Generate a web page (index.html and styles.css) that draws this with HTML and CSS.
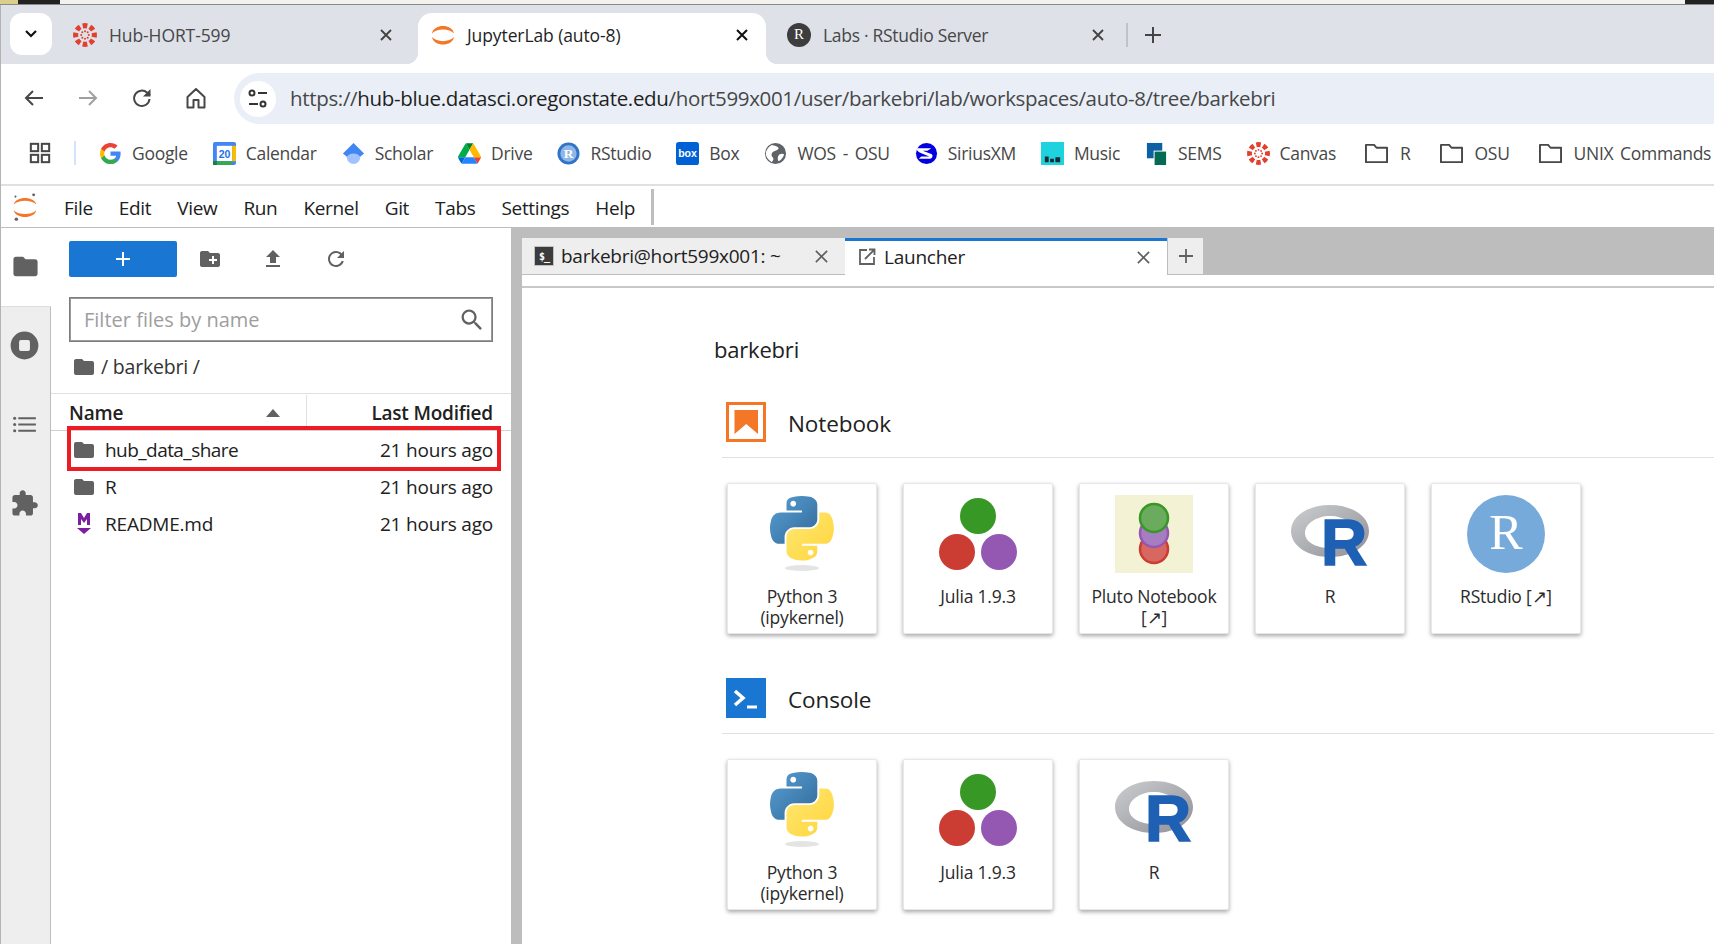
FILE: index.html
```html
<!DOCTYPE html>
<html>
<head>
    <meta charset="UTF-8">
    <title>JupyterLab (auto-8)</title>
    <link rel="stylesheet" href="styles.css">
</head>
<body>
    <svg class="sprites" width="0" height="0">
        <defs>
            <symbol id="canvas" viewBox="0 0 24 24">
                <g fill="#e2402f">
                    <path id="wedge" d="M9.200 .4a12 12 0 0 1 5.600 0l-1 5a7 7 0 0 0-3.600 0z"/>
                    <use href="#wedge" transform="rotate(45 12 12)"/>
                    <use href="#wedge" transform="rotate(90 12 12)"/>
                    <use href="#wedge" transform="rotate(135 12 12)"/>
                    <use href="#wedge" transform="rotate(180 12 12)"/>
                    <use href="#wedge" transform="rotate(225 12 12)"/>
                    <use href="#wedge" transform="rotate(270 12 12)"/>
                    <use href="#wedge" transform="rotate(315 12 12)"/>
                    <circle cx="12" cy="8.200" r="1"/><circle cx="12" cy="15.800" r="1"/>
                    <circle cx="8.200" cy="12" r="1"/><circle cx="15.800" cy="12" r="1"/>
                    <circle cx="9.300" cy="9.300" r="1"/><circle cx="14.700" cy="9.300" r="1"/>
                    <circle cx="9.300" cy="14.700" r="1"/><circle cx="14.700" cy="14.700" r="1"/>
                </g>
            </symbol>
            <symbol id="jupyter" viewBox="0 0 24 24">
                <path fill="#f37726" d="M1 10.500C2.500 .5 21.500 .5 23 10.500 18.500 5 5.500 5 1 10.500z"/>
                <path fill="#f37726" d="M1 14C2.500 24 21.500 24 23 14 18.500 19.500 5.500 19.500 1 14z"/>
            </symbol>
            <symbol id="folder" viewBox="0 0 24 24">
                <path d="M10 4H4c-1.100 0-1.990.9-1.990 2L2 18c0 1.100.9 2 2 2h16c1.100 0 2-.9 2-2V8c0-1.100-.9-2-2-2h-8l-2-2z"/>
            </symbol>
            <symbol id="folder-line" viewBox="0 0 24 24">
                <path fill="none" stroke="#474747" stroke-width="2" stroke-linejoin="round" d="M1 3h8.500l2.500 3h11v15H1z"/>
            </symbol>
            <symbol id="python" viewBox="0 0 78 78">
                <g transform="translate(7 1) scale(.575)">
                    <path fill="url(#py-blue)" d="M54.919 0C50.335.022 45.958.413 42.106 1.095 30.760 3.099 28.700 7.295 28.700 15.032v10.219h26.813v3.406H18.638c-7.793 0-14.616 4.684-16.750 13.594-2.462 10.213-2.571 16.586 0 27.250 1.906 7.938 6.458 13.594 14.250 13.594h9.219v-12.250c0-8.850 7.657-16.656 16.750-16.656h26.781c7.455 0 13.406-6.138 13.406-13.625V15.032c0-7.266-6.130-12.725-13.406-13.937C64.282.328 59.502-.02 54.919 0zm-14.500 8.220c2.770 0 5.031 2.298 5.031 5.124 0 2.817-2.261 5.094-5.031 5.094-2.780 0-5.031-2.277-5.031-5.094 0-2.826 2.251-5.125 5.031-5.125z"/>
                    <path fill="url(#py-yellow)" d="M85.638 28.657v11.906c0 9.231-7.826 17-16.750 17H42.106c-7.336 0-13.406 6.278-13.406 13.625v25.531c0 7.266 6.318 11.540 13.406 13.625 8.487 2.496 16.626 2.947 26.781 0 6.750-1.954 13.406-5.888 13.406-13.625V86.501H55.513v-3.406h40.187c7.792 0 10.696-5.421 13.406-13.594 2.800-8.414 2.740-16.505 0-27.250-1.925-7.737-5.604-13.594-13.406-13.594zM70.575 93.313c2.780 0 5.031 2.277 5.031 5.094 0 2.826-2.251 5.125-5.031 5.125-2.770 0-5.031-2.299-5.031-5.125 0-2.817 2.261-5.094 5.031-5.094z"/>
                </g>
                <ellipse cx="39" cy="73" rx="17" ry="3" fill="#e4e4e4"/>
            </symbol>
            <linearGradient id="py-blue" x1="0" y1="0" x2="1" y2="1">
                <stop offset="0" stop-color="#5a9fd4"/><stop offset="1" stop-color="#306998"/>
            </linearGradient>
            <linearGradient id="py-yellow" x1="0" y1="0" x2="1" y2="1">
                <stop offset="0" stop-color="#ffe873"/><stop offset="1" stop-color="#ffd43b"/>
            </linearGradient>
            <linearGradient id="r-grey" x1="0" y1="0" x2="1" y2="1">
                <stop offset="0" stop-color="#cbced0"/><stop offset="1" stop-color="#8f8f96"/>
            </linearGradient>
            <symbol id="julia" viewBox="0 0 78 78">
                <circle cx="39" cy="21" r="18" fill="#389826"/>
                <circle cx="18" cy="57" r="18" fill="#cb3c33"/>
                <circle cx="60" cy="57" r="18" fill="#9558b2"/>
            </symbol>
            <symbol id="rlogo" viewBox="0 0 78 78">
                <path fill="url(#r-grey)" fill-rule="evenodd" d="M0 36C0 21 17 10 39 10s39 11 39 26-17 26-39 26S0 51 0 36zm14 2c0 9 11 15 25 15s25-6 25-15-11-17-25-17-25 8-25 17z"/>
            </symbol>
        </defs>
    </svg>

    <div class="top-strip">
        <span class="strip-khaki"></span>
        <span class="strip-dark"></span>
        <span class="strip-fill"></span>
        <span class="strip-dark strip-end"></span>
    </div>

    <div class="window">
        <div class="tabstrip">
            <div class="tab-search">
                <svg width="14" height="10" viewBox="0 0 14 10"><path d="M2 2l5 5 5-5" fill="none" stroke="#111" stroke-width="2.200"/></svg>
            </div>
            <div class="tab tab-hub">
                <svg class="tab-icon"><use href="#canvas"/></svg>
                <span class="tab-title">Hub-HORT-599</span>
                <svg class="tab-close" viewBox="0 0 14 14"><path d="M2 2l10 10M12 2L2 12" stroke="#444" stroke-width="1.900"/></svg>
            </div>
            <div class="tab tab-active">
                <svg class="tab-icon"><use href="#jupyter"/></svg>
                <span class="tab-title">JupyterLab (auto-8)</span>
                <svg class="tab-close" viewBox="0 0 14 14"><path d="M2 2l10 10M12 2L2 12" stroke="#111" stroke-width="2"/></svg>
            </div>
            <div class="tab tab-rs">
                <span class="r-badge">R</span>
                <span class="tab-title">Labs · RStudio Server</span>
                <svg class="tab-close" viewBox="0 0 14 14"><path d="M2 2l10 10M12 2L2 12" stroke="#444" stroke-width="1.900"/></svg>
            </div>
            <span class="tab-sep"></span>
            <svg class="tab-new" width="18" height="18" viewBox="0 0 18 18"><path d="M9 1v16M1 9h16" stroke="#444" stroke-width="2"/></svg>
        </div>

        <div class="toolbar">
            <svg class="nav-btn" viewBox="0 0 24 24"><path d="M21 12H4M11 5l-7 7 7 7" fill="none" stroke="#474747" stroke-width="2"/></svg>
            <svg class="nav-btn" viewBox="0 0 24 24"><path d="M3 12h17M13 5l7 7-7 7" fill="none" stroke="#a0a0a0" stroke-width="2"/></svg>
            <svg class="nav-btn" viewBox="0 0 24 24"><path d="M19.500 13a7.700 7.700 0 1 1-2.300-6.200L20 9.500" fill="none" stroke="#474747" stroke-width="2"/><path d="M20.500 3v7.500H13z" fill="#474747"/></svg>
            <svg class="nav-btn" viewBox="0 0 24 24"><path d="M3.500 11L12 3l8.500 8v10.500h-6V14h-5v7.500h-6z" fill="none" stroke="#474747" stroke-width="2" stroke-linejoin="round"/></svg>
            <div class="omnibox">
                <span class="site-info">
                    <svg width="22" height="24" viewBox="0 0 22 24"><circle cx="5" cy="6" r="2.500" fill="none" stroke="#333" stroke-width="2"/><path d="M11 6h9M2 17h9" stroke="#333" stroke-width="2"/><circle cx="16" cy="17" r="2.500" fill="none" stroke="#333" stroke-width="2"/></svg>
                </span>
                <span class="url"><span class="url-dim">https://</span><span class="url-host">hub-blue.datasci.oregonstate.edu</span><span class="url-dim">/hort599x001/user/barkebri/lab/workspaces/auto-8/tree/barkebri</span></span>
            </div>
        </div>

        <div class="bookmarks">
            <svg class="apps" viewBox="0 0 24 24"><g fill="none" stroke="#474747" stroke-width="2.200"><rect x="2" y="2" width="8" height="8"/><rect x="14" y="2" width="8" height="8"/><rect x="2" y="14" width="8" height="8"/><rect x="14" y="14" width="8" height="8"/></g></svg>
            <span class="bm-sep"></span>
            <div class="bm">
                <svg class="bm-icon" viewBox="0 0 24 24">
                    <path fill="#4285F4" d="M22.560 12.250c0-.78-.07-1.530-.2-2.250H12v4.260h5.920c-.26 1.370-1.040 2.530-2.210 3.310v2.770h3.570c2.080-1.920 3.280-4.740 3.280-8.090z"/>
                    <path fill="#34A853" d="M12 23c2.970 0 5.460-.98 7.280-2.660l-3.570-2.770c-.98.66-2.230 1.060-3.710 1.060-2.860 0-5.290-1.930-6.160-4.530H2.180v2.840C3.990 20.530 7.700 23 12 23z"/>
                    <path fill="#FBBC05" d="M5.840 14.090c-.22-.66-.35-1.360-.35-2.090s.13-1.430.35-2.090V7.070H2.180C1.430 8.550 1 10.220 1 12s.43 3.450 1.180 4.930l3.660-2.840z"/>
                    <path fill="#EA4335" d="M12 5.380c1.620 0 3.060.56 4.210 1.640l3.150-3.150C17.450 2.090 14.970 1 12 1 7.700 1 3.990 3.470 2.180 7.070l3.660 2.840c.87-2.600 3.300-4.530 6.160-4.530z"/>
                </svg>
                <span>Google</span>
            </div>
            <div class="bm">
                <svg class="bm-icon" viewBox="0 0 24 24">
                    <rect width="24" height="24" rx="2" fill="#4285f4"/>
                    <rect x="4" y="4" width="16" height="16" fill="#fff"/>
                    <rect x="4" y="20" width="16" height="4" fill="#34a853"/>
                    <rect y="20" width="4" height="4" fill="#188038"/>
                    <rect x="20" y="4" width="4" height="16" fill="#fbbc04"/>
                    <text x="12" y="17" class="cal-num">20</text>
                </svg>
                <span>Calendar</span>
            </div>
            <div class="bm">
                <svg class="bm-icon" viewBox="0 0 24 24">
                    <circle cx="12" cy="16" r="7" fill="#a0c3ff"/>
                    <path d="M12 1l11 11-4 3.500C17 13 15 12 12 12s-5 1-7 3.500L1 12z" fill="#4285f4"/>
                </svg>
                <span>Scholar</span>
            </div>
            <div class="bm">
                <svg class="bm-icon" viewBox="0 0 87.300 78">
                    <path d="m6.600 66.850 3.850 6.650c.8 1.400 1.950 2.500 3.300 3.300l13.750-23.800h-27.500c0 1.550.4 3.100 1.200 4.500z" fill="#0066da"/>
                    <path d="m43.650 25-13.750-23.800c-1.350.8-2.500 1.900-3.300 3.300l-25.400 44a9.060 9.060 0 0 0 -1.200 4.500h27.500z" fill="#00ac47"/>
                    <path d="m73.550 76.800c1.350-.8 2.500-1.900 3.300-3.300l1.600-2.750 7.650-13.250c.8-1.400 1.200-2.950 1.200-4.500h-27.502l5.852 11.500z" fill="#ea4335"/>
                    <path d="m43.650 25 13.750-23.800c-1.350-.8-2.900-1.200-4.500-1.200h-18.500c-1.600 0-3.150.45-4.500 1.200z" fill="#00832d"/>
                    <path d="m59.800 53h-32.300l-13.750 23.800c1.350.8 2.900 1.200 4.500 1.200h50.800c1.600 0 3.150-.45 4.500-1.200z" fill="#2684fc"/>
                    <path d="m73.400 26.500-12.700-22c-.8-1.400-1.950-2.500-3.300-3.300l-13.750 23.800 16.150 28h27.450c0-1.550-.4-3.100-1.200-4.500z" fill="#ffba00"/>
                </svg>
                <span>Drive</span>
            </div>
            <div class="bm">
                <svg class="bm-icon" viewBox="0 0 24 24">
                    <circle cx="12" cy="12" r="11.500" fill="#2f74c8"/>
                    <circle cx="12" cy="12" r="8.500" fill="#8fb6e6"/>
                    <text x="12" y="17" class="bm-r">R</text>
                </svg>
                <span>RStudio</span>
            </div>
            <div class="bm">
                <svg class="bm-icon" viewBox="0 0 24 24">
                    <rect width="24" height="24" rx="3" fill="#0061d5"/>
                    <text x="12" y="16" class="bm-box">box</text>
                </svg>
                <span>Box</span>
            </div>
            <div class="bm">
                <svg class="bm-icon" viewBox="0 0 24 24">
                    <circle cx="12" cy="12" r="11" fill="#5f6368"/>
                    <path d="M8 3c3 1 6 1 7 3s-3 3-5 4-3 4-1 6 0 4-1 5c-3-2-6-5-6-9 0-4 3-7 6-9zM16 13c2-1 4-1 5 0-1 3-3 6-6 7-1-2-1-5 1-7z" fill="#fff"/>
                </svg>
                <span>WOS - OSU</span>
            </div>
            <div class="bm">
                <svg class="bm-icon" viewBox="0 0 24 24">
                    <circle cx="12" cy="12" r="11" fill="#0000e0"/>
                    <path d="M2 6.500h15L13 9H8l9 3.500c2.500 1.500 1 5-2 5H4l2.500-2.500H15L6 11.500C3.500 10 1 8.500 2 6.500z" fill="#fff"/>
                </svg>
                <span>SiriusXM</span>
            </div>
            <div class="bm">
                <svg class="bm-icon" viewBox="0 0 24 24">
                    <rect width="24" height="24" fill="#1ed3de"/>
                    <path d="M4 15h4v6H4zM9.500 17.500h4V21h-4zM15 16h5v5h-5z" fill="#1c2b33"/>
                </svg>
                <span>Music</span>
            </div>
            <div class="bm bm-sems">
                <svg class="bm-icon" viewBox="0 0 24 24">
                    <rect x="2" y="1" width="16" height="16" fill="#0b61a4"/>
                    <rect x="9" y="9" width="13" height="14" fill="#fff"/>
                    <rect x="10" y="10" width="12" height="14" fill="#046a53"/>
                </svg>
                <span>SEMS</span>
            </div>
            <div class="bm">
                <svg class="bm-icon"><use href="#canvas"/></svg>
                <span>Canvas</span>
            </div>
            <div class="bm bm-folder">
                <svg class="bm-icon"><use href="#folder-line"/></svg>
                <span>R</span>
            </div>
            <div class="bm bm-folder">
                <svg class="bm-icon"><use href="#folder-line"/></svg>
                <span>OSU</span>
            </div>
            <div class="bm bm-folder">
                <svg class="bm-icon"><use href="#folder-line"/></svg>
                <span>UNIX Commands</span>
            </div>
        </div>

        <div class="menubar">
            <svg class="jp-logo" viewBox="0 0 30 34">
                <path fill="#f37726" d="M2 14C4 4 26 4 28 14 22 8.500 8 8.500 2 14z"/>
                <path fill="#f37726" d="M2 21C4 31 26 31 28 21 22 26.500 8 26.500 2 21z"/>
                <circle cx="25" cy="3" r="1.700" fill="#616161"/>
                <circle cx="4" cy="5" r="1.200" fill="#616161"/>
                <circle cx="5" cy="31" r="2" fill="#616161"/>
            </svg>
            <div class="menu-items">
                <span>File</span><span>Edit</span><span>View</span><span>Run</span><span>Kernel</span><span>Git</span><span>Tabs</span><span>Settings</span><span>Help</span>
            </div>
            <span class="menu-end"></span>
        </div>

        <div class="workspace">
            <div class="sidebar">
                <div class="side-tab side-active">
                    <svg class="side-icon" viewBox="0 0 24 24"><use href="#folder"/></svg>
                </div>
                <div class="side-tab">
                    <svg class="side-icon" viewBox="0 0 24 24"><path fill-rule="evenodd" d="M12 .5a11.500 11.500 0 1 1 0 23 11.500 11.500 0 0 1 0-23zM9 7.500A1.500 1.500 0 0 0 7.500 9v6A1.500 1.500 0 0 0 9 16.500h6a1.500 1.500 0 0 0 1.500-1.500V9A1.500 1.500 0 0 0 15 7.500z"/></svg>
                </div>
                <div class="side-tab">
                    <svg class="side-icon" viewBox="-2 -2 28 28"><path d="M6 5h17v2H6zM6 11h17v2H6zM6 17h17v2H6z"/><circle cx="2.500" cy="6" r="1.500"/><circle cx="2.500" cy="12" r="1.500"/><circle cx="2.500" cy="18" r="1.500"/></svg>
                </div>
                <div class="side-tab">
                    <svg class="side-icon" viewBox="0 0 24 24"><path d="M20.500 11H19V7c0-1.100-.9-2-2-2h-4V3.500C13 2.120 11.880 1 10.500 1S8 2.120 8 3.500V5H4c-1.100 0-1.990.9-1.990 2v3.800H3.500c1.490 0 2.700 1.210 2.700 2.700s-1.210 2.700-2.700 2.700H2V20c0 1.100.9 2 2 2h3.800v-1.500c0-1.490 1.210-2.700 2.700-2.700 1.490 0 2.700 1.210 2.700 2.700V22H17c1.100 0 2-.9 2-2v-4h1.500c1.380 0 2.500-1.120 2.500-2.500S21.880 11 20.500 11z"/></svg>
                </div>
            </div>

            <div class="files">
                <div class="files-toolbar">
                    <button class="new-btn">
                        <svg width="16" height="16" viewBox="0 0 16 16"><path d="M8 1v14M1 8h14" stroke="#fff" stroke-width="2"/></svg>
                    </button>
                    <svg class="tool-icon" viewBox="0 0 24 24"><path d="M20 6h-8l-2-2H4c-1.110 0-1.990.89-1.990 2L2 18c0 1.110.89 2 2 2h16c1.110 0 2-.89 2-2V8c0-1.110-.89-2-2-2zm-1 8h-3v3h-2v-3h-3v-2h3V9h2v3h3v2z"/></svg>
                    <svg class="tool-icon" viewBox="0 0 24 24"><path d="M9 16h6v-6h4l-7-7-7 7h4v6zm-4 2h14v2H5z"/></svg>
                    <svg class="tool-icon" viewBox="0 0 24 24"><path d="M17.650 6.350C16.200 4.900 14.210 4 12 4c-4.420 0-7.990 3.580-7.990 8s3.570 8 7.990 8c3.730 0 6.840-2.550 7.730-6h-2.080c-.82 2.330-3.040 4-5.650 4-3.310 0-6-2.690-6-6s2.690-6 6-6c1.660 0 3.140.69 4.220 1.780L13 11h7V4l-2.350 2.350z"/></svg>
                </div>
                <div class="filter">
                    <span>Filter files by name</span>
                    <svg class="search-icon" viewBox="0 0 24 24"><path d="M15.500 14h-.79l-.28-.27A6.470 6.470 0 0 0 16 9.500 6.500 6.500 0 1 0 9.500 16c1.610 0 3.090-.59 4.230-1.570l.27.28v.79l5 4.990L20.490 19l-4.990-5zm-6 0C7.010 14 5 11.990 5 9.500S7.010 5 9.500 5 14 7.010 14 9.500 11.990 14 9.500 14z"/></svg>
                </div>
                <div class="crumbs">
                    <svg class="file-icon"><use href="#folder"/></svg>
                    <span>/ barkebri /</span>
                </div>
                <div class="list-head">
                    <div class="head-name">
                        <span>Name</span>
                        <svg width="14" height="8" viewBox="0 0 14 8"><path d="M0 8l7-8 7 8z" fill="#616161"/></svg>
                    </div>
                    <div class="head-date">Last Modified</div>
                </div>
                <div class="list-row">
                    <svg class="file-icon"><use href="#folder"/></svg>
                    <span class="row-name row-tight">hub_data_share</span>
                    <span class="row-date">21 hours ago</span>
                    <span class="row-mark"></span>
                </div>
                <div class="list-row">
                    <svg class="file-icon"><use href="#folder"/></svg>
                    <span class="row-name">R</span>
                    <span class="row-date">21 hours ago</span>
                </div>
                <div class="list-row">
                    <svg class="file-icon" viewBox="0 0 24 24">
                        <path d="M6 1h3l3 5 3-5h3v12h-3V7l-3 4-3-4v6H6z" fill="#7b1fa2"/>
                        <path d="M5 16h14l-7 6z" fill="#7b1fa2"/>
                    </svg>
                    <span class="row-name">README.md</span>
                    <span class="row-date">21 hours ago</span>
                </div>
            </div>

            <div class="main">
                <div class="doc-tabs">
                    <div class="doc-tab">
                        <span class="term-icon">$_</span>
                        <span class="doc-title">barkebri@hort599x001: ~</span>
                        <svg class="doc-close" viewBox="0 0 16 16"><path d="M2 2l12 12M14 2L2 14" stroke="#616161" stroke-width="1.800"/></svg>
                    </div>
                    <div class="doc-tab doc-current">
                        <svg class="launch-icon" viewBox="0 0 18 18"><path d="M9 2H2v14h14V9" fill="none" stroke="#616161" stroke-width="1.800"/><path d="M7 11l9-9M11 1.500h5.500V7" fill="none" stroke="#616161" stroke-width="1.800"/></svg>
                        <span class="doc-title">Launcher</span>
                        <svg class="doc-close" viewBox="0 0 16 16"><path d="M2 2l12 12M14 2L2 14" stroke="#616161" stroke-width="1.800"/></svg>
                    </div>
                    <div class="doc-add">
                        <svg width="16" height="16" viewBox="0 0 16 16"><path d="M8 1v14M1 8h14" stroke="#616161" stroke-width="1.800"/></svg>
                    </div>
                </div>
                <div class="doc-toolbar"></div>
                <div class="launcher">
                    <div class="cwd">barkebri</div>

                    <div class="section-head">
                        <svg class="section-icon" viewBox="0 0 40 40">
                            <rect x="1.500" y="1.500" width="37" height="37" fill="#fff" stroke="#f37726" stroke-width="3"/>
                            <path d="M8.500 8h23.500v24l-11.700-10L8.500 32z" fill="#f37726"/>
                        </svg>
                        <span>Notebook</span>
                    </div>
                    <div class="cards">
                        <div class="card">
                            <svg class="card-icon"><use href="#python"/></svg>
                            <div class="card-label">Python 3<br>(ipykernel)</div>
                        </div>
                        <div class="card">
                            <svg class="card-icon"><use href="#julia"/></svg>
                            <div class="card-label">Julia 1.9.3</div>
                        </div>
                        <div class="card">
                            <svg class="card-icon" viewBox="0 0 78 78">
                                <rect width="78" height="78" fill="#f4f2d5"/>
                                <circle cx="39" cy="54" r="14" fill="#d8675f" stroke="#cb3c33" stroke-width="2.500"/>
                                <circle cx="39" cy="38" r="14" fill="#a77dc1" stroke="#9558b2" stroke-width="2.500"/>
                                <circle cx="39" cy="23" r="14" fill="#6aab5d" stroke="#389826" stroke-width="2.500"/>
                            </svg>
                            <div class="card-label">Pluto Notebook<br>[↗]</div>
                        </div>
                        <div class="card">
                            <svg class="card-icon" viewBox="0 0 78 78">
                                <use href="#rlogo"/>
                                <text x="30" y="70" class="r-big">R</text>
                            </svg>
                            <div class="card-label">R</div>
                        </div>
                        <div class="card">
                            <svg class="card-icon" viewBox="0 0 78 78">
                                <circle cx="39" cy="39" r="39" fill="#75aadb"/>
                                <text x="39" y="54" class="r-serif">R</text>
                            </svg>
                            <div class="card-label">RStudio [↗]</div>
                        </div>
                    </div>

                    <div class="section-head section-console">
                        <svg class="section-icon" viewBox="0 0 40 40">
                            <rect width="40" height="40" fill="#1976d2"/>
                            <path d="M9 13l8 7-8 7" fill="none" stroke="#fff" stroke-width="3.500"/>
                            <path d="M21 29h10" stroke="#fff" stroke-width="3"/>
                        </svg>
                        <span>Console</span>
                    </div>
                    <div class="cards">
                        <div class="card">
                            <svg class="card-icon"><use href="#python"/></svg>
                            <div class="card-label">Python 3<br>(ipykernel)</div>
                        </div>
                        <div class="card">
                            <svg class="card-icon"><use href="#julia"/></svg>
                            <div class="card-label">Julia 1.9.3</div>
                        </div>
                        <div class="card">
                            <svg class="card-icon" viewBox="0 0 78 78">
                                <use href="#rlogo"/>
                                <text x="30" y="70" class="r-big">R</text>
                            </svg>
                            <div class="card-label">R</div>
                        </div>
                    </div>
                </div>
            </div>
        </div>
    </div>
</body>
</html>
```

FILE: styles.css
```css
* {
    box-sizing: border-box;
}

html, body {
    margin: 0;
    height: 100%;
    overflow: hidden;
}

body {
    width: 1714px;
    height: 944px;
    font-family: "Open Sans", "Noto Sans", sans-serif;
    color: #333;
    background: #fff;
}

.sprites {
    position: absolute;
}

/* strip of desktop above the browser */
.top-strip {
    display: flex;
    height: 5px;
    background: #f4f2ec;
    border-bottom: 1px solid #8a8a8a;
}

.strip-khaki {
    width: 18px;
    background: #d9cf8a;
}

.strip-dark {
    width: 42px;
    background: #222;
}

.strip-fill {
    flex: 1;
}

.strip-end {
    width: 29px;
}

.window {
    height: 939px;
    border-left: 1px solid #b4b4b4;
    display: flex;
    flex-direction: column;
}

/* chrome tabs */
.tabstrip {
    height: 59px;
    display: flex;
    align-items: flex-end;
    background: #dee1e7;
    font-size: 17.500px;
    letter-spacing: -0.1px;
    color: #474747;
}

.tab-search {
    width: 42px;
    height: 42px;
    margin: 0 0 9px 9px;
    border-radius: 12px;
    background: #fff;
    display: flex;
    align-items: center;
    justify-content: center;
}

.tab {
    height: 51px;
    display: flex;
    align-items: center;
    padding-bottom: 8px;
}

.tab-icon {
    width: 24px;
    height: 24px;
}

.tab-hub {
    width: 366px;
    padding-left: 21px;
}

.tab-title {
    margin-left: 12px;
    white-space: nowrap;
}

.tab-close {
    width: 14px;
    height: 14px;
    margin-left: auto;
}

.tab-hub .tab-close {
    margin-right: 25px;
}

.tab-active {
    position: relative;
    width: 348px;
    padding-left: 13px;
    background: #fff;
    border-radius: 14px 14px 0 0;
    color: #1f1f1f;
}

/* the little flares at the foot of the active tab */
.tab-active::before,
.tab-active::after {
    content: "";
    position: absolute;
    bottom: 0;
    width: 12px;
    height: 12px;
}

.tab-active::before {
    left: -12px;
    background: radial-gradient(circle at 0 0, transparent 12px, #fff 12.500px);
}

.tab-active::after {
    right: -12px;
    background: radial-gradient(circle at 100% 0, transparent 12px, #fff 12.500px);
}

.tab-active .tab-close {
    margin-right: 17px;
}

.tab-rs {
    width: 360px;
    padding-left: 21px;
    letter-spacing: -0.3px;
}

.tab-rs .tab-close {
    margin-right: 21px;
}

.r-badge {
    width: 24px;
    height: 24px;
    border-radius: 50%;
    background: #3d3d3d;
    color: #fff;
    font-family: "Liberation Serif", serif;
    font-size: 15px;
    letter-spacing: 0;
    display: flex;
    align-items: center;
    justify-content: center;
}

.tab-sep {
    width: 2px;
    height: 24px;
    margin: 0 0 17px 0;
    background: #bfc2c8;
}

.tab-new {
    margin: 0 0 20px 16px;
}

/* address bar */
.toolbar {
    height: 60px;
    display: flex;
    align-items: flex-start;
    padding: 9px 0 0 21px;
    gap: 30px;
    background: #fff;
    border-radius: 12px 0 0 0;
}

.nav-btn {
    width: 24px;
    height: 24px;
    margin-top: 13px;
}

.omnibox {
    flex: 1;
    height: 51px;
    margin-left: -4px;
    border-radius: 26px 0 0 26px;
    background: #eaeff7;
    display: flex;
    align-items: center;
    padding-left: 6px;
}

.site-info {
    width: 36px;
    height: 36px;
    border-radius: 50%;
    background: #fff;
    display: flex;
    align-items: center;
    justify-content: center;
}

.url {
    margin: -2px 0 0 14px;
    font-size: 20.500px;
    letter-spacing: -0.33px;
    white-space: nowrap;
}

.url-dim {
    color: #474747;
}

.url-host {
    color: #1f1f1f;
}

/* bookmarks */
.bookmarks {
    height: 62px;
    display: flex;
    align-items: center;
    padding: 0 0 2px 28px;
    border-bottom: 2px solid #e0e0e0;
    font-size: 17.500px;
    letter-spacing: -0.3px;
    word-spacing: 2.500px;
    color: #474747;
    white-space: nowrap;
    overflow: hidden;
}

.bookmarks > * {
    flex: none;
}

.apps {
    width: 22px;
    height: 22px;
}

.bm-sep {
    width: 2px;
    height: 24px;
    margin: 0 23px 0 23px;
    background: #d3e3fd;
}

.bm {
    display: flex;
    align-items: center;
    gap: 10px;
    margin-right: 25px;
}

.bm-folder {
    gap: 12px;
    margin-left: 4px;
}

.bm-icon {
    width: 23px;
    height: 23px;
    flex: none;
}

.cal-num {
    font: 700 11px "Liberation Sans", sans-serif;
    letter-spacing: 0;
    fill: #1a73e8;
    text-anchor: middle;
}

.bm-r {
    font: 700 14px "Liberation Serif", serif;
    letter-spacing: 0;
    fill: #fff;
    text-anchor: middle;
}

.bm-box {
    font: 700 11px "Liberation Sans", sans-serif;
    letter-spacing: 0;
    fill: #fff;
    text-anchor: middle;
}

/* jupyter menu */
.menubar {
    height: 42px;
    flex: none;
    display: flex;
    align-items: center;
    padding-left: 11px;
    border-bottom: 1px solid #bdbdbd;
}

.jp-logo {
    width: 26px;
    height: 30px;
}

.menu-items {
    display: flex;
    gap: 26px;
    margin-left: 26px;
    padding-top: 2px;
    font-size: 19px;
    letter-spacing: -0.33px;
    color: #212121;
}

.menu-end {
    width: 3px;
    height: 36px;
    margin-left: 16px;
    background: #bdbdbd;
}

.workspace {
    flex: 1;
    display: flex;
    min-height: 0;
}

.sidebar {
    width: 50px;
    flex: none;
    background: #eee;
    border-right: 1px solid #bdbdbd;
}

.side-tab {
    height: 79px;
    display: flex;
    align-items: center;
    justify-content: center;
    padding: 0 2px 2px 0;
}

.side-active {
    width: 50px;
    background: #fff;
    border-bottom: 1px solid #ddd;
}

.side-icon {
    width: 29px;
    height: 29px;
    fill: #616161;
}

/* file browser */
.files {
    width: 460px;
    flex: none;
    padding-top: 13px;
    position: relative;
}

.files-toolbar {
    display: flex;
    align-items: center;
    padding-left: 18px;
    height: 36px;
}

.new-btn {
    width: 108px;
    height: 36px;
    border: none;
    border-radius: 2px;
    background: #1976d2;
    display: flex;
    align-items: center;
    justify-content: center;
}

.tool-icon {
    width: 24px;
    height: 24px;
    fill: #616161;
    margin-right: 39px;
}

.new-btn + .tool-icon {
    margin-left: 21px;
}

.filter {
    display: flex;
    align-items: center;
    justify-content: space-between;
    height: 45px;
    margin: 20px 18px 0 18px;
    padding: 0 6px 0 14px;
    border: 1px solid #7d7d7d;
    box-shadow: inset 0 0 0 1px #9a9a9a;
    font-size: 20px;
    color: #9e9e9e;
}

.search-icon {
    width: 28px;
    height: 28px;
    fill: #616161;
}

.crumbs {
    display: flex;
    align-items: center;
    gap: 5px;
    height: 51px;
    padding: 0 0 2px 21px;
    font-size: 19.500px;
    letter-spacing: -0.2px;
}

.file-icon {
    width: 24px;
    height: 24px;
    fill: #616161;
    flex: none;
}

.list-head {
    display: flex;
    height: 38px;
    padding-top: 1px;
    border-top: 1px solid #e0e0e0;
    border-bottom: 1px solid #d0d0d0;
    font-size: 19px;
    letter-spacing: -0.2px;
    font-weight: 600;
    color: #212121;
}

.head-name {
    width: 256px;
    display: flex;
    align-items: center;
    justify-content: space-between;
    padding: 0 26px 0 18px;
    border-right: 1px solid #e0e0e0;
}

.head-date {
    flex: 1;
    display: flex;
    align-items: center;
    justify-content: flex-end;
    padding-right: 18px;
}

.list-row {
    position: relative;
    display: flex;
    align-items: center;
    height: 37px;
    padding: 0 18px 0 21px;
    font-size: 19px;
    letter-spacing: -0.2px;
    color: #212121;
}

.row-name {
    margin-left: 9px;
}

.row-tight {
    letter-spacing: -0.55px;
}

.row-date {
    margin-left: auto;
}

/* the red mark drawn over the first row */
.row-mark {
    position: absolute;
    left: 16px;
    top: -5px;
    width: 434px;
    height: 45px;
    border: 4px solid #ed1c24;
}

/* document area */
.main {
    flex: 1;
    min-width: 0;
    background: #fff;
    border-left: 11px solid #bdbdbd;
}

.doc-tabs {
    height: 47px;
    padding-top: 10px;
    display: flex;
    background: #bdbdbd;
    font-size: 19px;
    letter-spacing: -0.25px;
    color: #212121;
}

.doc-tab {
    width: 323px;
    display: flex;
    align-items: center;
    padding: 0 16px 0 13px;
    background: #eee;
    border-bottom: 1px solid #bdbdbd;
}

.doc-current {
    width: 322px;
    background: #fff;
    border-top: 3px solid #1976d2;
    border-bottom: none;
    margin-bottom: -1px;
    padding: 0 16px 3px 13px;
}

.term-icon {
    width: 18px;
    height: 18px;
    background: #3c3c3c;
    color: #fff;
    font: 700 10px "DejaVu Sans Mono", monospace;
    letter-spacing: -1px;
    display: flex;
    align-items: center;
    justify-content: center;
    box-shadow: 0 0 0 1px #c0c0c0;
}

.launch-icon {
    width: 18px;
    height: 18px;
}

.doc-title {
    margin-left: 8px;
    white-space: nowrap;
}

.doc-close {
    width: 15px;
    height: 15px;
    margin-left: auto;
}

.doc-add {
    width: 36px;
    display: flex;
    align-items: center;
    justify-content: center;
    background: #eee;
    border-left: 1px solid #bdbdbd;
    border-bottom: 1px solid #bdbdbd;
}

.doc-toolbar {
    height: 13px;
    border-bottom: 2px solid #c8c8c8;
}

.launcher {
    padding: 48px 0 0 192px;
}

.cwd {
    height: 27px;
    font-size: 22px;
    line-height: 27px;
    letter-spacing: -0.2px;
    color: #212121;
}

.section-head {
    display: flex;
    align-items: center;
    gap: 22px;
    margin: 39px 0 0 8px;
    padding: 0 0 15px 4px;
    border-bottom: 1px solid #e0e0e0;
    font-size: 22.500px;
    letter-spacing: -0.1px;
    line-height: 36px;
    color: #212121;
}

.section-head span {
    padding-top: 3px;
}

.section-console {
    margin-top: 44px;
}

.section-icon {
    width: 40px;
    height: 40px;
}

.cards {
    display: grid;
    grid-template-columns: repeat(5, 150px);
    gap: 26px;
    margin: 25px 0 0 13px;
}

.card {
    height: 151px;
    padding-top: 11px;
    text-align: center;
    background: #fff;
    border: 1px solid #e8e8e8;
    border-radius: 2px;
    box-shadow: 0 2px 4px rgba(0, 0, 0, 0.35);
}

.card-icon {
    display: block;
    width: 78px;
    height: 78px;
    margin: 0 auto;
    overflow: visible;
}

.card-label {
    margin-top: 13px;
    font-size: 17.500px;
    line-height: 21px;
    letter-spacing: -0.2px;
    color: #2b2b2b;
}

.r-big {
    font: 700 64px "Liberation Sans", sans-serif;
    fill: #1e60b4;
    stroke: #1e60b4;
    stroke-width: 1.500px;
}

.r-serif {
    font: 400 50px "Liberation Serif", serif;
    fill: #fff;
    text-anchor: middle;
}
```
